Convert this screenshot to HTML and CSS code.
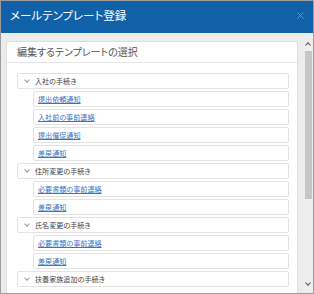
FILE: index.html
```html
<!DOCTYPE html>
<html lang="ja">
  <head>
    <meta charset="UTF-8" />
    <meta name="viewport" content="width=device-width, initial-scale=1.0" />
    <title>メールテンプレート登録</title>
    <link rel="stylesheet" href="styles.css">
  </head>
  <body>
    <div class="dialog">
      <!-- ヘッダー -->
      <header class="dialog-head">
        <h1>メールテンプレート登録</h1>
        <svg class="close" width="7" height="7" viewBox="0 0 7 7">
          <path d="M0.5 0.5 L6.5 6.5 M6.5 0.5 L0.5 6.5" stroke="#6f94bd" stroke-width="1" fill="none" />
        </svg>
      </header>

      <div class="dialog-body">
        <div class="content">
          <section class="panel">
            <div class="panel-head">編集するテンプレートの選択</div>
            <div class="panel-body">
              <div class="row group"><span class="chev"></span>入社の手続き</div>
              <div class="row item"><a href="#">提出依頼通知</a></div>
              <div class="row item"><a href="#">入社前の事前連絡</a></div>
              <div class="row item"><a href="#">提出催促通知</a></div>
              <div class="row item"><a href="#">差戻通知</a></div>

              <div class="row group"><span class="chev"></span>住所変更の手続き</div>
              <div class="row item"><a href="#">必要書類の事前連絡</a></div>
              <div class="row item"><a href="#">差戻通知</a></div>

              <div class="row group"><span class="chev"></span>氏名変更の手続き</div>
              <div class="row item"><a href="#">必要書類の事前連絡</a></div>
              <div class="row item"><a href="#">差戻通知</a></div>

              <div class="row group"><span class="chev"></span>扶養家族追加の手続き</div>
            </div>
          </section>
        </div>

        <!-- スクロールバー -->
        <div class="scrollbar">
          <span class="arrow up"></span>
          <div class="track"><div class="thumb"></div></div>
          <span class="arrow down"></span>
        </div>
      </div>
    </div>
  </body>
</html>
```

FILE: styles.css
```css
:root {
  --azul: #1161a9;
  --cinza-fundo: #ececec;
  --borda: #dedede;
  --link: #3673c4;
}

* {
  margin: 0;
  padding: 0;
  box-sizing: border-box;
}

body {
  font-family: "Noto Sans CJK JP", "Noto Sans", sans-serif;
  font-feature-settings: "palt";
  background-color: #ffffff;
}

.dialog {
  width: 314px;
  height: 294px;
  border: 1px solid #9c9c9c;
  display: flex;
  flex-direction: column;
  overflow: hidden;
}

.dialog-head {
  height: 32px;
  flex-shrink: 0;
  background-color: var(--azul);
  display: flex;
  align-items: center;
  justify-content: space-between;
  padding: 0 9px 4px 9px;
}

.dialog-head h1 {
  font-size: 11.5px;
  font-weight: normal;
  color: #ffffff;
}

.close {
  display: block;
}

.dialog-body {
  flex: 1;
  display: flex;
  background-color: var(--cinza-fundo);
  overflow: hidden;
}

.content {
  flex: 1;
  padding: 8px 5px 0 5px;
  overflow: hidden;
}

.panel {
  background-color: #ffffff;
  border: 1px solid var(--borda);
  height: 300px;
}

.panel-head {
  height: 21px;
  line-height: 20px;
  padding: 0 10px;
  border-bottom: 1px solid #e6e6e6;
  font-size: 10px;
  color: #555555;
}

.panel-body {
  padding: 10px 8px 0 10px;
}

.row {
  height: 16px;
  margin-bottom: 2px;
  border: 1px solid #e2e2e2;
  border-radius: 2px;
  display: flex;
  align-items: center;
  font-size: 7.1px;
  white-space: nowrap;
}

.group {
  padding-left: 6px;
  color: #444444;
}

.chev {
  width: 4px;
  height: 4px;
  border-right: 1px solid #9a9a9a;
  border-bottom: 1px solid #9a9a9a;
  transform: rotate(45deg);
  margin: 0 6px 2px 1px;
}

.item {
  margin-left: 16px;
  padding-left: 4px;
}

.item a {
  color: var(--link);
  text-decoration: underline;
}

/* Barra de rolagem */
.scrollbar {
  width: 10px;
  flex-shrink: 0;
  background-color: #eeeeee;
  display: flex;
  flex-direction: column;
  align-items: center;
  padding: 8px 0 5px 0;
}

.arrow {
  width: 4px;
  height: 4px;
  border-left: 1px solid #555555;
  border-top: 1px solid #555555;
}

.arrow.up {
  transform: rotate(45deg);
  margin-top: 2px;
}

.arrow.down {
  transform: rotate(225deg);
  margin-bottom: 3px;
}

.track {
  flex: 1;
  width: 100%;
  padding: 4px 1px 0 2px;
}

.thumb {
  height: 148px;
  background-color: #c6c6c6;
}
```
